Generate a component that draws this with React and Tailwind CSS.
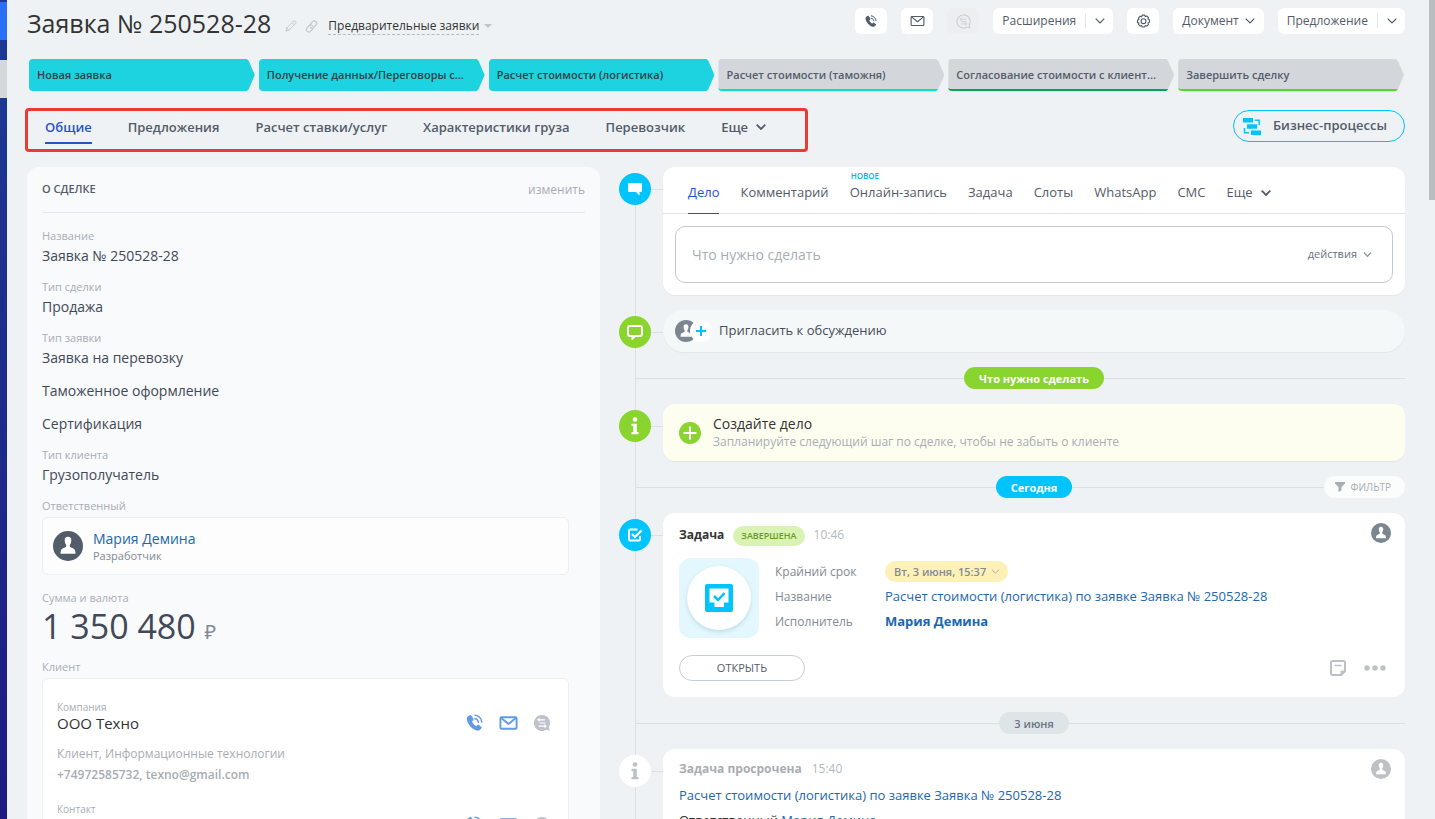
import React from 'react';
import clsx from 'clsx';

const stages = [
  { name: 'Новая заявка', className: 'bg-[#1ed3e0] border-[#1ed3e0] text-[#333f48]' },
  { name: 'Получение данных/Переговоры с...', className: 'bg-[#1ed3e0] border-[#1ed3e0] text-[#333f48]' },
  { name: 'Расчет стоимости (логистика)', className: 'bg-[#1ed3e0] border-[#1ed3e0] text-[#333f48]' },
  { name: 'Расчет стоимости (таможня)', className: 'bg-[#d3d7dc] border-[#00e4c6] text-[#535c69]' },
  { name: 'Согласование стоимости с клиент...', className: 'bg-[#d3d7dc] border-[#00a651] text-[#535c69]' },
  { name: 'Завершить сделку', className: 'bg-[#d3d7dc] border-[#50d82c] text-[#535c69]' },
];

const tabs = ['Общие', 'Предложения', 'Расчет ставки/услуг', 'Характеристики груза', 'Перевозчик'];

const actionTabs = [
  { name: 'Дело', active: true },
  { name: 'Комментарий' },
  { name: 'Онлайн-запись', isNew: true },
  { name: 'Задача' },
  { name: 'Слоты' },
  { name: 'WhatsApp' },
  { name: 'СМС' },
];

const fields = [
  { label: 'Название', values: ['Заявка № 250528-28'] },
  { label: 'Тип сделки', values: ['Продажа'] },
  { label: 'Тип заявки', values: ['Заявка на перевозку', 'Таможенное оформление', 'Сертификация'] },
  { label: 'Тип клиента', values: ['Грузополучатель'] },
];

const Chevron = ({ className = 'h-[6px] w-[10px]', strokeWidth = 1.2 }) => (
  <svg viewBox="0 0 10 6" className={clsx('shrink-0', className)} fill="none" stroke="currentColor" strokeWidth={strokeWidth}>
    <path d="m.7.7 4.300 4.300L9.300.7" />
  </svg>
);

const PhoneIcon = ({ className }) => (
  <svg viewBox="0 0 16 16" className={className} fill="currentColor">
    <path d="M3.6 1.2 1.5 2.4C.3 3.4.4 6.2 2.300 9.200c2 3.200 5 5.700 7.600 6.300 1.400.3 2.600.1 3.400-.7l1.200-1.500c.4-.5.300-1-.2-1.400l-2.400-1.700c-.5-.3-1-.2-1.300.2l-.9 1.100c-1.500-.7-3.300-2.600-4.100-4.400l1.100-.9c.5-.4.6-.8.400-1.400L5.200 1.600c-.3-.6-.9-.8-1.600-.4z" />
    <path d="M8.300 4.200c1.900.3 3.100 1.600 3.400 3.600M8.300 1.100c3.500.4 6 2.900 6.500 6.500" fill="none" stroke="currentColor" strokeWidth="1.300" strokeLinecap="round" />
  </svg>
);

const MailIcon = ({ className, strokeWidth = 1.5 }) => (
  <svg viewBox="0 0 20 16" className={className} fill="none" stroke="currentColor" strokeWidth={strokeWidth} strokeLinejoin="round">
    <rect x="1.500" y="2" width="17" height="12" rx="1" />
    <path d="m2 2.500 8 6.500 8-6.500" />
  </svg>
);

const ChatIcon = ({ className }) => (
  <svg viewBox="0 0 16 16" className={className}>
    <path d="M8 0a8 8 0 1 0 4.200 14.800L16 15.800l-1.200-3.600A8 8 0 0 0 8 0z" fill="currentColor" />
    <path d="M4 4.800h7M5.500 8h6M4.500 11.200H12M5.500 3.300 4 4.800l1.500 1.500M10.500 9.700l1.500 1.500-1.500 1.500" fill="none" stroke="#fff" strokeWidth="1.200" />
  </svg>
);

const ChatOutlineIcon = ({ className }) => (
  <svg viewBox="0 0 16 16" className={className} fill="none" stroke="currentColor" strokeWidth="1.200">
    <path d="M8 1a7 7 0 1 0 3.800 12.900l3 .8-.8-3A7 7 0 0 0 8 1z" />
    <path d="M4.300 5.600h6M5.500 8h5.500M5.500 10.600h6M5.800 4.200 4.300 5.600 5.800 7M10 9.200l1.500 1.400L10 12" strokeWidth="1" />
  </svg>
);

const GearIcon = ({ className }) => (
  <svg viewBox="0 0 16 16" className={className} fill="none" stroke="currentColor" strokeWidth="1.200" strokeLinejoin="round">
    <path d="M6.700 1.200h2.600l.6 1.500 1.500-.6 1.900 1.800-.6 1.500 1.600.8.1 2.600-1.600.7.5 1.600-1.800 1.800-1.600-.6-.6 1.600H6.700l-.7-1.600-1.500.6-1.900-1.800.6-1.500L1.600 9.200V6.500l1.600-.7-.6-1.500 1.900-1.900 1.500.6z" />
    <circle cx="8" cy="7.700" r="2.600" />
  </svg>
);

const PersonIcon = ({ className }) => (
  <svg viewBox="0 0 30 30" className={clsx('shrink-0', className)}>
    <circle cx="15" cy="15" r="15" fill="currentColor" />
    <path d="M15 5.800c-2.200 0-3.400 1.400-3.300 3.300l.2 2c.2 1.300.8 2.300 1.300 2.800v1.700c-.4 1.100-4.800 1.700-5.300 4-.2 1-.3 2.200-.4 3.200h15c-.1-1-.2-2.200-.4-3.200-.5-2.300-4.900-2.900-5.300-4v-1.700c.5-.5 1.100-1.500 1.300-2.800l.2-2c.1-1.900-1.100-3.300-3.300-3.300z" fill="#fff" />
  </svg>
);

const ProcessIcon = ({ className }) => (
  <svg viewBox="0 0 18 17" className={className}>
    <path d="M0 0h10v4.500H0zM4 6.200h10v4.500H4zM8 12.400h10V17H8z" fill="currentColor" />
    <path d="M12 2.200h4.200V7M1.500 10v4.700H6" fill="none" stroke="currentColor" strokeWidth="1.500" />
  </svg>
);

const InfoIcon = ({ className }) => (
  <svg viewBox="0 0 8 18" className={className} fill="currentColor">
    <circle cx="4" cy="2.500" r="2.300" />
    <path d="M.5 6.800h5.300v8.300h1.700v2.100H.5v-2.100h1.700V8.900H.5z" />
  </svg>
);

const CheckIcon = ({ className }) => (
  <svg viewBox="0 0 16 16" className={className} fill="none" stroke="currentColor" strokeWidth="2">
    <path d="M10.500 2.500H3.200c-.8 0-1.200.4-1.200 1.200v8.600c0 .8.400 1.200 1.200 1.200h8.600c.8 0 1.200-.4 1.200-1.200V9" />
    <path d="m5 7 3 3 6.500-6.500" strokeWidth="2.200" />
  </svg>
);

const NoteIcon = ({ className }) => (
  <svg viewBox="0 0 16 16" className={className} fill="none" stroke="currentColor" strokeWidth="2" strokeLinejoin="round">
    <path d="M2.500 1h11c1 0 1.500.5 1.500 1.500v8.700L11.200 15H2.500C1.500 15 1 14.500 1 13.500v-11C1 1.500 1.500 1 2.500 1z" />
    <path d="M11 14.500V11h3.500z" fill="currentColor" strokeWidth="1" />
    <path d="M4.500 5.500h7" strokeWidth="1.500" />
  </svg>
);

const HeaderButton = ({ children, className, ...props }) => (
  <button
    type="button"
    className={clsx('flex h-[26px] items-center justify-center rounded-md text-xs text-[#525c69]', className)}
    {...props}
  >
    {children}
  </button>
);

const SplitButton = ({ label }) => (
  <div className="flex h-[26px] items-center rounded-md bg-white text-xs text-[#525c69]">
    <button type="button" className="px-[9px]">{label}</button>
    <span className="h-[14px] w-px bg-[#e3e6e9]" />
    <button type="button" aria-label={`${label}: меню`} className="flex h-full w-[27px] items-center justify-center">
      <Chevron />
    </button>
  </div>
);

function Header() {
  return (
    <header className="flex h-[59px] items-start justify-between">
      <div className="flex items-center pt-[3px]">
        <h1 className="text-[25px] leading-10 font-medium text-[#333]">Заявка № 250528-28</h1>
        <button type="button" aria-label="Редактировать" className="mt-[6px] ml-[14px] text-[#c3c8cd]">
          <svg viewBox="0 0 12 12" className="size-3" fill="none" stroke="currentColor">
            <path d="m1 11 .7-3L8.500 1.200c.6-.6 1.500-.3 2 .2s.8 1.300.2 2L4 10.200zM7.300 2.500l2.200 2.200M1.700 8l2.200 2.200" />
          </svg>
        </button>
        <button type="button" aria-label="Скопировать ссылку" className="mt-[6px] ml-2 text-[#c3c8cd]">
          <svg viewBox="0 0 14 14" className="size-[13px]" fill="none" stroke="currentColor" strokeWidth="1.300" strokeLinecap="round">
            <path d="m5.600 4.700 2.600-2.900c2.200-2.200 5.800 1.300 3.800 3.500L9.500 8c-1.200 1.200-3 .8-3.700-.4" />
            <path d="m8.400 9.300-2.600 2.900c-2.200 2.200-5.800-1.300-3.800-3.500L4.500 6c1.200-1.200 3-.8 3.700.4" />
          </svg>
        </button>
        <button type="button" className="mt-[6px] ml-[10px] flex items-center gap-[5px] text-xs leading-4 text-[#333]">
          <span className="border-b border-dashed border-[#b5bac0]">Предварительные заявки</span>
          <svg viewBox="0 0 8 4" className="h-1 w-2" fill="#c0c5ca"><path d="M0 0h8L4 4z" /></svg>
        </button>
      </div>
      <div className="flex gap-[14px] pt-2">
        <HeaderButton aria-label="Позвонить" className="w-8 bg-white"><PhoneIcon className="size-3" /></HeaderButton>
        <HeaderButton aria-label="Написать письмо" className="w-8 bg-white"><MailIcon className="h-3 w-[15px]" strokeWidth={1.5} /></HeaderButton>
        <HeaderButton aria-label="Чат" disabled className="w-8 bg-[#edeef0] text-[#ccced1]"><ChatOutlineIcon className="size-[15px]" /></HeaderButton>
        <SplitButton label="Расширения" />
        <HeaderButton aria-label="Настройки" className="w-8 bg-white"><GearIcon className="size-[15px]" /></HeaderButton>
        <HeaderButton className="gap-[6px] bg-white px-[9px]">Документ <Chevron /></HeaderButton>
        <SplitButton label="Предложение" />
      </div>
    </header>
  );
}

function Stages() {
  return (
    <div className="grid grid-cols-6 gap-1 pr-px pl-[2px]">
      {stages.map(stage => (
        <button
          key={stage.name}
          type="button"
          className={clsx(
            'h-8 min-w-0 truncate rounded-l-sm border-b-2 pt-[3px] pr-2 pl-2 text-left text-[11px] font-semibold [clip-path:polygon(0_0,calc(100%-8px)_0,calc(100%-6px)_2px,100%_50%,calc(100%-6px)_calc(100%-2px),calc(100%-8px)_100%,0_100%)]',
            stage.className
          )}
        >
          {stage.name}
        </button>
      ))}
    </div>
  );
}

function Tabs() {
  return (
    <div className="mt-[17px] -ml-[2px] flex items-start justify-between">
      <nav className="flex h-11 items-start gap-9 rounded-[4px] border-[3px] border-[#e73c32] pr-[39px] pl-[17px] text-[13px] font-semibold text-[#525c69]">
        {tabs.map((tab, idx) => (
          <a key={tab} href="#" className={clsx('pt-[6px] leading-5', idx === 0 && 'border-b-2 border-[#2753cd] pb-[5px] text-[#2753cd]')}>
            {tab}
          </a>
        ))}
        <button type="button" className="flex items-center gap-2 pt-[6px] leading-5">
          Еще <Chevron strokeWidth={1.8} />
        </button>
      </nav>
      <button type="button" className="mt-[2px] flex h-8 items-center gap-3 rounded-full border border-[#00c4fb] pr-[17px] pl-[9px] text-[13px] font-semibold text-[#535c69]">
        <ProcessIcon className="h-[17px] w-[18px] text-[#00c4fb]" />
        Бизнес-процессы
      </button>
    </div>
  );
}

const FieldLabel = ({ children }) => <div className="text-[11px] leading-4 text-[#a8adb4]">{children}</div>;

function ClientEntry({ label, children }) {
  return (
    <div className="flex h-[102px] items-start justify-between">
      <div>
        <div className="text-[10px] leading-4 text-[#a8adb4]">{label}</div>
        {children}
      </div>
      <div className="flex items-center gap-4 pt-[15px] text-[#609be6]">
        <button type="button" aria-label="Позвонить"><PhoneIcon className="size-[17px]" /></button>
        <button type="button" aria-label="Написать письмо"><MailIcon className="h-4 w-[19px]" strokeWidth={2} /></button>
        <button type="button" aria-label="Чат" disabled className="text-[#bfc2ca]"><ChatIcon className="size-4" /></button>
      </div>
    </div>
  );
}

function DealCard() {
  return (
    <section className="rounded-xl bg-[#f9fafc] px-[15px]">
      <div className="flex h-[46px] items-center justify-between border-b border-[#e4e9ec]">
        <h2 className="text-[11px] font-semibold text-[#535c69]">О СДЕЛКЕ</h2>
        <button type="button" className="text-xs text-[#a8adb4]">изменить</button>
      </div>
      <div className="pt-[15px] pr-4">
        {fields.map(field => (
          <div key={field.label}>
            <FieldLabel>{field.label}</FieldLabel>
            <div className="flex flex-col gap-[13px] pt-[2px] pb-[13px] text-sm leading-5 text-[#424956]">
              {field.values.map(value => <p key={value}>{value}</p>)}
            </div>
          </div>
        ))}
        <FieldLabel>Ответственный</FieldLabel>
        <div className="mt-[3px] mb-[15px] flex h-[58px] items-center gap-[10px] rounded-md border border-[#eceff1] bg-[#fdfdfe] px-[10px]">
          <PersonIcon className="size-[30px] text-[#535c69]" />
          <div className="pt-[2px]">
            <a href="#" className="block text-sm leading-[18px] text-[#2067b0]">Мария Демина</a>
            <p className="text-[11px] leading-4 text-[#828b95]">Разработчик</p>
          </div>
        </div>
        <FieldLabel>Сумма и валюта</FieldLabel>
        <p className="mb-[13px] text-[34px] leading-10 text-[#424956]">
          1 350 480 <span className="text-xl text-[#828b95]">₽</span>
        </p>
        <FieldLabel>Клиент</FieldLabel>
        <div className="mt-[3px] rounded-md border border-[#eceff1] bg-white pt-5 pr-[18px] pl-[14px]">
          <ClientEntry label="Компания">
            <p className="text-[15px] leading-4 text-[#333]">ООО Техно</p>
            <p className="mt-[13px] text-xs leading-5 text-[#a8adb4]">Клиент, Информационные технологии</p>
            <p className="text-xs leading-[22px] font-semibold text-[#a8adb4]">+74972585732, texno@gmail.com</p>
          </ClientEntry>
          <ClientEntry label="Контакт" />
        </div>
      </div>
    </section>
  );
}

function TimelineRow({ icon, iconClassName, children }) {
  return (
    <div className="flex items-stretch">
      <div className="flex w-8 shrink-0 flex-col">
        <div className={clsx('mt-[6px] flex size-8 shrink-0 items-center justify-center rounded-full', iconClassName)}>
          {icon}
        </div>
        <div className="ml-4 w-px flex-1 bg-[#dbe0e3]" />
        <div className="ml-4 -mb-[6px] h-[6px] w-px bg-[#dbe0e3]" />
      </div>
      <div className="mt-[22px] h-px w-3 shrink-0 bg-[#dbe0e3]" />
      <div className="min-w-0 flex-1 pb-[15px]">{children}</div>
    </div>
  );
}

function TimelineSeparator({ label, className, children }) {
  return (
    <div className="ml-4 border-l border-[#dbe0e3]">
      <div className="flex items-center pb-[15px]">
        <div className="h-px w-[27px] bg-[#dbe0e3]" />
        <div className="grid flex-1 grid-cols-[1fr_auto_1fr] items-center">
          <div className="h-px bg-[#dbe0e3]" />
          <span className={clsx('flex h-[22px] items-center rounded-full px-[15px] pt-[2px] text-[11px]', className)}>{label}</span>
          <div className="flex items-center">
            <div className="h-px flex-1 bg-[#dbe0e3]" />
            {children}
          </div>
        </div>
      </div>
      {/* the line goes on down to the next round icon */}
      <div className="-mb-[6px] -ml-px h-[6px] w-px bg-[#dbe0e3]" />
    </div>
  );
}

function ActionCard() {
  return (
    <div className="rounded-xl bg-white shadow-[0_1px_1px_rgba(0,0,0,0.05)]">
      <nav className="flex h-[47px] items-stretch gap-[21px] border-b border-[#e1e4e6] px-[25px] text-[13px] text-[#525c69]">
        {actionTabs.map(tab => (
          <a
            key={tab.name}
            href="#"
            className={clsx('relative -mb-px flex items-center pt-[5px]', tab.active && 'border-b border-[#2753cd] text-[#2753cd]')}
          >
            {tab.isNew && <span className="absolute top-1 left-[1px] text-[8px] leading-[10px] font-semibold text-[#00b8f0]">НОВОЕ</span>}
            {tab.name}
          </a>
        ))}
        <button type="button" className="flex items-center gap-2 pt-[5px]">
          Еще <Chevron strokeWidth={1.8} />
        </button>
      </nav>
      <div className="p-3">
        <div className="flex h-[57px] items-center rounded-[10px] border border-[#c6c9cc] pr-5 pl-4">
          <input
            type="text"
            aria-label="Что нужно сделать"
            placeholder="Что нужно сделать"
            className="min-w-0 flex-1 text-sm outline-none placeholder:text-[#a8adb4]"
          />
          <button type="button" className="flex items-center gap-[6px] text-[11px] text-[#6a737f]">
            действия <Chevron className="h-[5px] w-[9px] text-[#959ca4]" strokeWidth={1.8} />
          </button>
        </div>
      </div>
    </div>
  );
}

function TaskCard() {
  return (
    <div className="rounded-xl bg-white px-4 pt-3 pb-4">
      <div className="flex h-[33px] items-start">
        <h3 className="text-xs leading-5 font-bold text-[#333]">Задача</h3>
        <span className="mt-[1px] ml-[9px] flex h-5 items-center rounded-full bg-[#dbf2b5] px-2 text-[9px] font-semibold text-[#6a9a1e]">ЗАВЕРШЕНА</span>
        <time className="ml-[9px] text-xs leading-5 text-[#b4b9be]">10:46</time>
        <PersonIcon className="-mt-[2px] mr-[-2px] ml-auto size-5 text-[#7b8691]" />
      </div>
      <div className="flex items-start gap-4">
        <div className="flex size-20 shrink-0 items-center justify-center rounded-xl bg-[#e2f8fe]">
          <div className="flex size-16 items-center justify-center rounded-full bg-white shadow-[0_2px_4px_rgba(0,60,90,0.15)]">
            <svg viewBox="0 0 28 28" className="size-7">
              <path fillRule="evenodd" fill="#00c4fb" d="M2 0h24a2 2 0 0 1 2 2v24a2 2 0 0 1-2 2H2a2 2 0 0 1-2-2V2a2 2 0 0 1 2-2zm2.500 4.500v14h5V23h9.500v-4.500h4.500v-14z" />
              <path d="m9 12 4 4 6.500-7" fill="none" stroke="#00c4fb" strokeWidth="2.500" />
            </svg>
          </div>
        </div>
        <dl className="grid grid-cols-[110px_1fr] items-center text-xs leading-[25px] text-[#828b95]">
          <dt>Крайний срок</dt>
          <dd className="flex h-[26px] items-center">
            <button type="button" className="flex h-[21px] items-center gap-[5px] rounded-full bg-[#fef1b8] pr-2 pl-[9px] text-[11px] font-semibold text-[#828b95]">
              Вт, 3 июня, 15:37 <Chevron className="h-[5px] w-[9px] text-[#b3ae97]" />
            </button>
          </dd>
          <dt>Название</dt>
          <dd><a href="#" className="text-[13px] text-[#2067b0]">Расчет стоимости (логистика) по заявке Заявка № 250528-28</a></dd>
          <dt>Исполнитель</dt>
          <dd><a href="#" className="text-[13px] font-bold text-[#2067b0]">Мария Демина</a></dd>
        </dl>
      </div>
      <div className="mt-[17px] flex items-center justify-between">
        <button type="button" className="h-[26px] w-[126px] rounded-full border border-[#c6cdd3] text-[11px] font-medium text-[#535c69]">ОТКРЫТЬ</button>
        <div className="flex items-center gap-[18px] pr-[3px] text-[#bdc1c6]">
          <button type="button" aria-label="Заметка"><NoteIcon className="size-4" /></button>
          <button type="button" aria-label="Ещё">
            <svg viewBox="0 0 22 6" className="h-[6px] w-[22px]" fill="currentColor">
              <circle cx="3" cy="3" r="2.700" /><circle cx="11" cy="3" r="2.700" /><circle cx="19" cy="3" r="2.700" />
            </svg>
          </button>
        </div>
      </div>
    </div>
  );
}

function Timeline() {
  return (
    <section className="min-w-0">
      <TimelineRow
        iconClassName="bg-[#00c4fb] text-white"
        icon={
          <svg viewBox="0 0 14 13" className="h-[13px] w-[14px]" fill="currentColor">
            <path d="M1 0h12a1 1 0 0 1 1 1v7a1 1 0 0 1-1 1h-1.500v3.500L8 9H1a1 1 0 0 1-1-1V1a1 1 0 0 1 1-1z" />
          </svg>
        }
      >
        <ActionCard />
      </TimelineRow>
      <TimelineRow
        iconClassName="bg-[#89d42f] text-white"
        icon={
          <svg viewBox="0 0 16 15" className="h-[15px] w-4" fill="none" stroke="currentColor" strokeWidth="2">
            <path d="M3 1h10a2 2 0 0 1 2 2v6a2 2 0 0 1-2 2H8l-2.500 2.500V11H3a2 2 0 0 1-2-2V3a2 2 0 0 1 2-2z" />
          </svg>
        }
      >
        <button type="button" className="flex h-[42px] w-full items-center rounded-full bg-[#f4f8f9] pl-3 text-[13px] text-[#464d58] shadow-[0_1px_1px_rgba(0,0,0,0.05)]">
          <PersonIcon className="size-[22px] text-[#7b8691]" />
          <span className="-ml-[7px] flex size-[22px] items-center justify-center rounded-full bg-white">
            <svg viewBox="0 0 10 10" className="size-[10px]" stroke="#00c4fb" strokeWidth="2"><path d="M5 0v10M0 5h10" /></svg>
          </span>
          <span className="ml-[7px]">Пригласить к обсуждению</span>
        </button>
      </TimelineRow>
      <TimelineSeparator label="Что нужно сделать" className="bg-[#89d42f] font-bold text-white" />
      <TimelineRow iconClassName="bg-[#89d42f] text-white" icon={<InfoIcon className="h-[18px] w-2" />}>
        <div className="flex h-[57px] items-center gap-3 rounded-xl bg-[#fefef0] px-4 shadow-[0_1px_1px_rgba(0,0,0,0.05)]">
          <button type="button" aria-label="Создать дело">
            <svg viewBox="0 0 22 22" className="size-[22px]">
              <circle cx="11" cy="11" r="11" fill="#89d42f" />
              <path d="M11 4.500v13M4.500 11h13" stroke="#fff" strokeWidth="2" />
            </svg>
          </button>
          <div className="pt-[1px]">
            <p className="text-sm leading-[18px] text-[#333]">Создайте дело</p>
            <p className="text-xs leading-[18px] text-[#a8adb4]">Запланируйте следующий шаг по сделке, чтобы не забыть о клиенте</p>
          </div>
        </div>
      </TimelineRow>
      <TimelineSeparator label="Сегодня" className="bg-[#00c4fb] font-bold text-white">
        <button type="button" className="flex h-[22px] items-center gap-[6px] rounded-full bg-[#fbfdfd] px-[11px] pr-[14px] text-[10px] text-[#a8adb4]">
          <svg viewBox="0 0 10 10" className="size-[10px]" fill="currentColor"><path d="M0 0h10v1.500L6.500 5v3.500L3.500 10V5L0 1.500z" /></svg>
          ФИЛЬТР
        </button>
      </TimelineSeparator>
      <TimelineRow iconClassName="bg-[#00c4fb] text-white" icon={<CheckIcon className="size-4" />}>
        <TaskCard />
      </TimelineRow>
      <TimelineSeparator label="3 июня" className="bg-[#dde5e8] font-semibold text-[#6a737f]" />
      <TimelineRow iconClassName="bg-white text-[#bdc1c6]" icon={<InfoIcon className="h-[18px] w-2" />}>
        <div className="rounded-xl bg-white px-4 pt-[10px] pb-4 text-[13px]">
          <div className="flex items-start text-xs leading-5">
            <h3 className="font-bold text-[#a8adb4]">Задача просрочена</h3>
            <time className="ml-[10px] text-[#b4b9be]">15:40</time>
            <PersonIcon className="mr-[-2px] ml-auto size-5 text-[#bdc1c6]" />
          </div>
          <p className="mt-[6px] leading-5"><a href="#" className="text-[#2067b0]">Расчет стоимости (логистика) по заявке Заявка № 250528-28</a></p>
          <p className="mt-[5px] leading-5 text-[#333]">Ответственный <a href="#" className="text-[#2067b0]">Мария Демина</a></p>
        </div>
      </TimelineRow>
    </section>
  );
}

export default function App() {
  return (
    <div className="flex h-screen overflow-hidden bg-[#eef2f4] font-['Open_Sans','Noto_Sans',sans-serif]">
      <div className="flex w-[7px] shrink-0 flex-col bg-linear-to-b from-[#1c3a94] to-[#1e1a80]">
        <div className="mt-[2px] h-[38px] bg-[#2970f7]" />
        <div className="mt-5 h-[38px] bg-[#d5d8da]" />
      </div>
      <main className="min-w-0 flex-1 pr-6 pl-5">
        <Header />
        <Stages />
        <Tabs />
        <div className="mt-[15px] grid grid-cols-[573fr_786fr] gap-[19px]">
          <DealCard />
          <Timeline />
        </div>
      </main>
      <div className="w-[6px] shrink-0">
        <div className="h-[200px] bg-[#b9bdbf]" />
      </div>
    </div>
  );
}
